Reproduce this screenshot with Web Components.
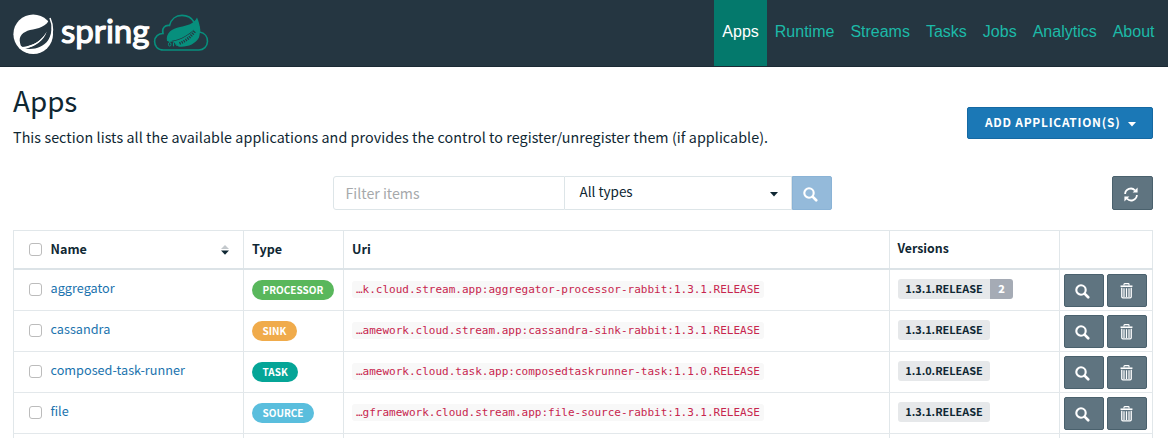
<!DOCTYPE html>
<html lang="en">
<head>
<meta charset="utf-8">
<title>Spring Cloud Data Flow</title>
<style>
html,body{margin:0;background:#fff;overflow:hidden;height:438px}
body{font-family:"Noto Sans CJK SC","Open Sans",sans-serif;color:#0f2733}
</style>
</head>
<body>
<data-flow-app></data-flow-app>
<script>
const define = (name, html) => customElements.define(name, class extends HTMLElement {
  constructor() {
    super();
    this.attachShadow({ mode: 'open' });
  }
  connectedCallback() {
    const t = document.createElement('template');
    t.innerHTML = typeof html === 'function' ? html(this) : html;
    this.shadowRoot.replaceChildren(t.content.cloneNode(true));
  }
});

const icons = {
  search: '<svg width="15" height="15" viewBox="0 0 15 15"><circle cx="6" cy="6" r="4.7" fill="none" stroke="#fff" stroke-width="2.1"/><path d="M9.6 9.6l3.600 3.600" stroke="#fff" stroke-width="2.7" stroke-linecap="round"/></svg>',
  trash: '<svg width="13" height="16" viewBox="0 0 14 17"><path d="M4.3 2.6V1.3q0-.7.7-.7h4q.7 0 .7.7v1.3" fill="none" stroke="#fff" stroke-width="1.2"/><path d="M.6 2.5h12.8v1.7H.6z" fill="#fff"/><path d="M1.9 5v9.8q0 1.2 1.2 1.2h7.8q1.2 0 1.2-1.2V5" fill="none" stroke="#fff" stroke-width="1.4"/><path d="M4.3 5.5v9.5M7 5.5v9.5M9.7 5.5v9.5" stroke="#fff" stroke-width="1.3"/></svg>',
  refresh: '<svg width="14" height="15" viewBox="0 0 14 15"><path d="M1.1 7A5.8 5.8 0 0 1 11 3.3M12.9 8A5.8 5.8 0 0 1 3 11.7" fill="none" stroke="#fff" stroke-width="1.8"/><path d="M13.6.6v5H8.6zM.4 14.4v-5h5z" fill="#fff"/></svg>'
};

define('spring-logo', `<style>:host{display:block;width:206px;height:52px}svg{display:block}
text{font-family:Lato,sans-serif;font-weight:400}</style>
<svg width="206" height="52" viewBox="8 8 206 52">
<circle cx="33.2" cy="34.2" r="19.800" fill="#fff"/>
<path d="M50 18C47 27 38 28.500 30 30C23 32 18.500 36 20 42.500C20.500 45 21 46.500 22 47C34 46 42 40 46.500 32C44 40 36 46.500 25 48.600C34 50 43 47.500 48.300 40C52 34 52.500 27 50 18Z" fill="#253641"/>
<path d="M22 47.600C34 46 42 40 47 31.500C42 41.500 34 47.500 23 49Z" fill="#fff"/>
<circle cx="21.200" cy="47.800" r="1.500" fill="#fff"/>
<path d="M50 18Q55.500 31 49 41" fill="none" stroke="#fff" stroke-width="1.500"/>
<text x="61" y="43" font-size="33.500" fill="#fff" stroke="#fff" stroke-width="1.200" textLength="88.500" lengthAdjust="spacingAndGlyphs">spring</text>
<path d="M163.500 50C157.500 50 154.600 46 154.600 41.500C154.600 36.500 158.500 33.500 163 33.500C161.500 28 165 24.800 169.500 25.500C171 19 176 15.400 182 15.400C188 15.400 192 18.500 194 22C198.500 24.500 199.800 28.500 199.500 32C205 33 207.700 37 207.500 41.500C207.300 46.500 203.500 50 199 50Z" fill="none" stroke="#078f7d" stroke-width="1.600"/>
<path d="M197 17.500C194 24 187 25.500 180 27C172 28.500 165.500 33 167 41C176 41.500 186 37 194 29.500C190 37 184 42 178 46.500C187 47.500 195 44.500 199 37.500C201 31 200 24 197 17.500Z" fill="#078f7d"/>
<path d="M167 36C167 39 167.500 41 169 42C178 41 187 37 193 31L197 30L196 40L181 46L178 46Z" fill="#078f7d"/>
<path d="M179.500 43.500C186 41 191 36.500 195 31" fill="none" stroke="#253641" stroke-width="2.800" stroke-dasharray="1.200 1.100"/>
<ellipse cx="169.700" cy="44.300" rx="1.300" ry="1.800" fill="none" stroke="#078f7d"/><path d="M173.500 42.300v4" stroke="#078f7d" stroke-width="1.200"/><ellipse cx="177" cy="43.800" rx="1.200" ry="1.700" fill="none" stroke="#078f7d"/>
</svg>`);

define('nav-item', `<style>:host{display:flex;box-sizing:border-box;height:66px;padding:0 8px;align-items:center;font:16px/20px "Liberation Sans",sans-serif;color:#1cbaa8}
:host([active]){background:#04796c;color:#fff}span{position:relative;top:-1px}</style><span><slot></slot></span>`);

define('top-bar', `<style>:host{display:flex;justify-content:space-between;height:67px;background:#253641;box-sizing:border-box;border-bottom:1px solid #1b2a34;padding:0 5.500px 0 8px}
spring-logo{margin-top:8px}nav{display:flex}</style><spring-logo></spring-logo><nav><slot></slot></nav>`);

define('tool-button', el => `<style>:host{display:flex;box-sizing:border-box;width:40px;height:33px;align-items:center;justify-content:center;background:#5f7480;border:1px solid #4a616d;border-radius:2px}
:host([kind=refresh]){width:41px;height:34px}:host([kind=find]){height:34px;background:#94bada;border-color:#8ab3d6;border-radius:0 2px 2px 0}
svg{display:block;position:relative;left:${el.getAttribute('icon') === 'trash' ? -.5 : -1.5}px;top:${el.getAttribute('icon') === 'trash' ? .5 : 1}px}</style>${icons[el.getAttribute('icon')]}`);

define('check-box', `<style>:host{display:block;box-sizing:border-box;width:13px;height:13px;border:1px solid #bcbcbc;border-radius:3px;background:#fff}</style>`);

define('type-pill', `<style>:host{display:inline-flex;height:20px;align-items:center;border-radius:10px;padding:0 10.500px;color:#fff;font-weight:700;font-size:10px;line-height:20px;box-sizing:border-box}
:host([kind=processor]){background:#59b75c}:host([kind=sink]){background:#f0ab4b}:host([kind=task]){background:#05a597}:host([kind=source]){background:#5abedd}</style><slot></slot>`);

define('version-tag', el => `<style>:host{display:inline-flex;height:20px;border-radius:3px;overflow:hidden;font-weight:700;font-size:10.900px;line-height:19px}
span{background:#e6e8ea;width:92px;text-align:center}b{background:#a5abb5;color:#fff;width:23px;text-align:center}</style><span><slot></slot></span>${el.hasAttribute('more') ? `<b>${el.getAttribute('more')}</b>` : ''}`);

const grid = `display:grid;grid-template-columns:230px 100px 546px 170px 93px;box-sizing:border-box;border-left:1px solid #e1e7ea;width:1140px`;

define('app-row', el => `<style>:host{${grid};height:41px;border-bottom:1px solid #e3e8eb}
div{display:flex;align-items:center;border-right:1px solid #e1e7ea;box-sizing:border-box;min-width:0}
.n{padding:0 0 1px 14.500px;gap:9px;color:#1b73ae;font-size:12.700px;line-height:20px}.n span{position:relative;top:-1.500px}
.t{padding:0 0 0 8px}.u{padding:0 0 0 8px}code{font:11px/17px "DejaVu Sans Mono",monospace;color:#c7254e;background:#f8f8f8;border-radius:3px;padding:0 4px;white-space:pre;position:relative;top:-.500px}
.v{padding:0 0 2px 8px}.a{padding:0 0 0 4px;gap:3px}</style>
<div class="n"><check-box></check-box><span>${el.getAttribute('name')}</span></div>
<div class="t"><type-pill kind="${el.getAttribute('type').toLowerCase()}">${el.getAttribute('type')}</type-pill></div>
<div class="u"><code>${el.getAttribute('uri')}</code></div>
<div class="v"><version-tag ${el.hasAttribute('more') ? `more="${el.getAttribute('more')}"` : ''}>${el.getAttribute('version')}</version-tag></div>
<div class="a"><tool-button icon="search"></tool-button><tool-button icon="trash"></tool-button></div>`);

define('app-head', `<style>:host{${grid};height:40px;border-top:1px solid #e1e7ea;border-bottom:2px solid #dce3e7;font-weight:700;font-size:12.600px;line-height:20px}
div{display:flex;align-items:center;border-right:1px solid #e1e7ea;box-sizing:border-box;padding:0 0 1px 8px}
.n{padding:0 14px 0 14.500px;gap:9px}.n span{position:relative;top:-.5px}.n svg{margin-left:auto}.v{font-size:12.300px;padding:0 0 3px 7.500px}</style>
<div class="n"><check-box></check-box><span>Name</span><svg width="8" height="10" viewBox="0 0 8 10"><path d="M0 4L4 0l4 4z" fill="#c3c8cc"/><path d="M0 5.500h8L4 9.700z" fill="#0f2733"/></svg></div>
<div>Type</div><div>Uri</div><div class="v">Versions</div><div></div>`);

define('filter-bar', `<style>:host{display:flex;width:499px;height:34px;font-size:14.200px;line-height:20px}
div{box-sizing:border-box;height:34px;border:1px solid #dde5e8;display:flex;align-items:center}
.i{width:232px;border-radius:3px 0 0 3px;padding-left:11.500px;color:#a6a9ab}.s{width:227px;border-left:0;padding:0 13px 0 14.500px;justify-content:space-between}
.s span{position:relative;top:-2px;font-size:13.500px}.s svg{position:relative;top:1px}</style>
<div class="i"><span>Filter items</span></div><div class="s"><span>All types</span><svg width="8" height="5"><path d="M0 0h8L4 4.500z" fill="#0f2733"/></svg></div><tool-button kind="find" icon="search"></tool-button>`);

define('add-button', `<style>:host{display:flex;box-sizing:border-box;width:186px;height:32px;background:#1b78b6;border:1px solid #1569a3;border-radius:2px;color:#fff;align-items:center;padding:0 16px 0 17px;justify-content:space-between;font-size:11.900px;line-height:20px;font-weight:700;letter-spacing:.750px}svg{margin-top:2px}span{position:relative;top:-1px}</style><span><slot></slot></span><svg width="8" height="5"><path d="M0 0h8L4 4.500z" fill="#fff"/></svg>`);

define('page-intro', `<style>:host{display:flex;justify-content:space-between;align-items:flex-start;padding:15px 15px 0 13px;height:94px}
h1{margin:0;font-weight:400;font-size:27.800px;line-height:36px;letter-spacing:0}p{margin:8px 0 0;font-size:14.300px;letter-spacing:.062px;line-height:22px;white-space:nowrap}add-button{margin-top:25px}</style>
<div><h1>Apps</h1><p>This section lists all the available applications and provides the control to register/unregister them (if applicable).</p></div><add-button>ADD APPLICATION(S)</add-button>`);

define('data-flow-app', `<style>:host{display:block;width:1168px;height:438px;overflow:hidden}
.tools{display:grid;grid-template-columns:333px 499px 1fr;padding-right:15px;height:54px}.tools tool-button{justify-self:end}filter-bar{grid-column:2}
.table{margin-left:13px}.last{${grid};height:10px}.last i{border-right:1px solid #e1e7ea}</style>
<top-bar><nav-item active>Apps</nav-item><nav-item>Runtime</nav-item><nav-item>Streams</nav-item><nav-item>Tasks</nav-item><nav-item>Jobs</nav-item><nav-item>Analytics</nav-item><nav-item>About</nav-item></top-bar>
<page-intro></page-intro>
<div class="tools"><filter-bar></filter-bar><tool-button kind="refresh" icon="refresh"></tool-button></div>
<div class="table"><app-head></app-head>
<app-row name="aggregator" type="PROCESSOR" uri="…k.cloud.stream.app:aggregator-processor-rabbit:1.3.1.RELEASE" version="1.3.1.RELEASE" more="2"></app-row>
<app-row name="cassandra" type="SINK" uri="…amework.cloud.stream.app:cassandra-sink-rabbit:1.3.1.RELEASE" version="1.3.1.RELEASE"></app-row>
<app-row name="composed-task-runner" type="TASK" uri="…amework.cloud.task.app:composedtaskrunner-task:1.1.0.RELEASE" version="1.1.0.RELEASE"></app-row>
<app-row name="file" type="SOURCE" uri="…gframework.cloud.stream.app:file-source-rabbit:1.3.1.RELEASE" version="1.3.1.RELEASE"></app-row>
<div class="last"><i></i><i></i><i></i><i></i><i></i></div></div>`);
</script>
</body>
</html>
